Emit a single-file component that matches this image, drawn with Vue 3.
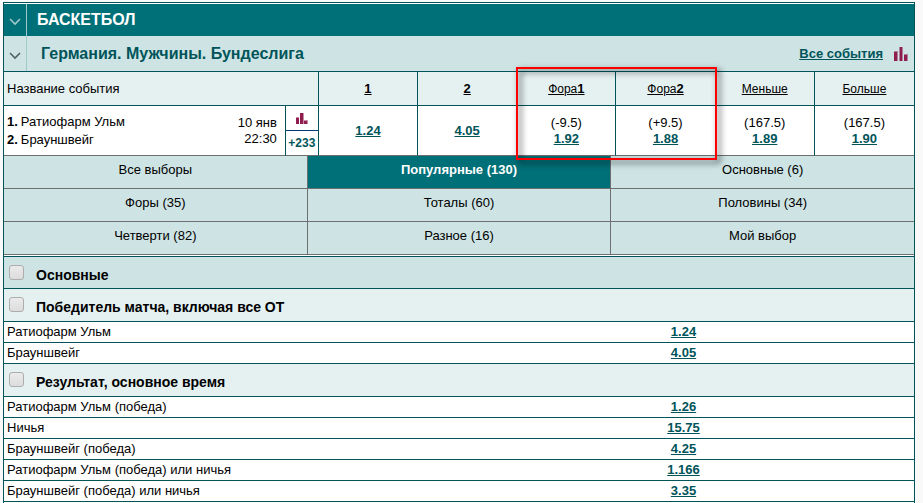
<template>
  <main class="board">
    <header class="sport">
      <button class="toggle" type="button" aria-label="Свернуть">
        <svg width="12" height="8" viewBox="0 0 12 8"><path d="M1 1l5 5 5-5" /></svg>
      </button>
      <h1>БАСКЕТБОЛ</h1>
    </header>

    <div class="league">
      <button class="toggle" type="button" aria-label="Свернуть">
        <svg width="12" height="8" viewBox="0 0 12 8"><path d="M1 1l5 5 5-5" /></svg>
      </button>
      <h2>Германия. Мужчины. Бундеслига</h2>
      <a class="all-events" href="#">Все события</a>
      <svg class="bars" width="14" height="14" viewBox="0 0 14 14">
        <path class="shade" d="M0 4h4v10H0zM5 0h4v14H5zM10 7h4v7h-4z" />
        <path d="M0 5h3v9H0zM6 0h2v14H6zM10 8h3v6h-3z" />
      </svg>
    </div>

    <div class="event">
      <table>
        <colgroup>
          <col />
          <col class="extra-col" />
          <col v-for="(price, i) in prices" :key="i" class="price-col" />
        </colgroup>
        <thead>
          <tr>
            <th class="name-head" colspan="2">Название события</th>
            <th v-for="col in columns" :key="col.text + col.bold">
              <a href="#">{{ col.text }}<b>{{ col.bold }}</b></a>
            </th>
          </tr>
        </thead>
        <tbody>
          <tr>
            <td>
              <div class="match">
                <div class="teams">
                  <div><b>1.</b><span>Ратиофарм Ульм</span></div>
                  <div><b>2.</b><span>Брауншвейг</span></div>
                </div>
                <div class="date">10 янв<br />22:30</div>
              </div>
            </td>
            <td>
              <div class="stats">
                <svg class="bars" width="12" height="11" viewBox="0 0 12 11">
                  <path class="shade" d="M0 4h3v7H0zM4 0h4v11H4zM8 7h4v4H8z" />
                  <path d="M0 5h3v6H0zM4 0h3v11H4zM8 8h3v3H8z" />
                </svg>
              </div>
              <a class="more" href="#">+233</a>
            </td>
            <td v-for="(price, i) in prices" :key="i" class="price">
              <div v-if="price.handicap">({{ price.handicap }})</div>
              <a class="odds" href="#">{{ price.value }}</a>
            </td>
          </tr>
        </tbody>
      </table>
      <div class="marker"></div>
    </div>

    <nav class="tabs">
      <button
        v-for="tab in tabs"
        :key="tab"
        type="button"
        :class="{ active: tab === activeTab }"
        @click="activeTab = tab"
      >
        {{ tab }}
      </button>
    </nav>

    <section class="markets">
      <label class="heading category">
        <input type="checkbox" />
        <span>Основные</span>
      </label>
      <template v-for="market in markets" :key="market.title">
        <label class="heading">
          <input type="checkbox" />
          <span>{{ market.title }}</span>
        </label>
        <table class="outcomes">
          <tbody>
            <tr v-for="row in market.rows" :key="row.name">
              <td>{{ row.name }}</td>
              <td class="outcome-price"><a class="odds" href="#">{{ row.price }}</a></td>
            </tr>
          </tbody>
        </table>
      </template>
    </section>
  </main>
</template>

<script setup>
import { ref } from "vue";

const columns = [
  { text: "", bold: "1" },
  { text: "", bold: "2" },
  { text: "Фора", bold: "1" },
  { text: "Фора", bold: "2" },
  { text: "Меньше", bold: "" },
  { text: "Больше", bold: "" },
];

const prices = [
  { value: "1.24" },
  { value: "4.05" },
  { handicap: "-9.5", value: "1.92" },
  { handicap: "+9.5", value: "1.88" },
  { handicap: "167.5", value: "1.89" },
  { handicap: "167.5", value: "1.90" },
];

const tabs = [
  "Все выборы",
  "Популярные (130)",
  "Основные (6)",
  "Форы (35)",
  "Тоталы (60)",
  "Половины (34)",
  "Четверти (82)",
  "Разное (16)",
  "Мой выбор",
];
const activeTab = ref("Популярные (130)");

const markets = [
  {
    title: "Победитель матча, включая все ОТ",
    rows: [
      { name: "Ратиофарм Ульм", price: "1.24" },
      { name: "Брауншвейг", price: "4.05" },
    ],
  },
  {
    title: "Результат, основное время",
    rows: [
      { name: "Ратиофарм Ульм (победа)", price: "1.26" },
      { name: "Ничья", price: "15.75" },
      { name: "Брауншвейг (победа)", price: "4.25" },
      { name: "Ратиофарм Ульм (победа) или ничья", price: "1.166" },
      { name: "Брауншвейг (победа) или ничья", price: "3.35" },
    ],
  },
];
</script>

<style>
body {
  background: #f9f9f9;
}
</style>

<style scoped>
.board {
  margin: 2px 8px 0 3px;
  padding-bottom: 1px;
  border: 1px solid #00545a;
  border-bottom: 0;
  background: #fff;
  color: #000;
  font-family: "Liberation Sans", Arial, sans-serif;
  font-size: 13px;
  line-height: 16px;
}
button {
  font: inherit;
  border: 0;
  padding: 0;
}
table {
  width: 100%;
  border-spacing: 0;
  table-layout: fixed;
}
.sport,
.league {
  display: flex;
  align-items: center;
}
.sport {
  height: 32px;
  margin-top: 1px;
  background: #007078;
  color: #fff;
}
.league {
  height: 35px;
  background: #cee4e4;
  color: #00545a;
  border-bottom: 1px solid #00545a;
}
h1,
h2 {
  margin: 0;
  font-size: 16px;
}
h1 {
  padding-left: 10px;
}
h2 {
  padding-left: 14px;
  flex: 1;
}
.toggle {
  display: flex;
  align-items: center;
  justify-content: center;
  align-self: stretch;
  width: 23px;
  background: none;
  border-right: 1px solid #9fcaca;
  color: #9fcaca;
}
.toggle svg {
  margin-top: 4px;
}
.league .toggle {
  color: #4f6363;
}
.toggle path {
  fill: none;
  stroke: currentColor;
  stroke-width: 1.6;
}
.bars {
  display: block;
  fill: #8f1d4f;
}
.bars .shade {
  fill-opacity: 0.5;
}
.all-events {
  color: #00545a;
  font-weight: bold;
}
.league .bars {
  margin: 0 6px 0 11px;
}

.event {
  position: relative;
}
.event th,
.event td {
  padding: 0;
  border-right: 1px solid #00545a;
}
.event th:last-child,
.event td:last-child {
  border-right: 0;
}
.event th {
  height: 33px;
  background: #e5f1f1;
  border-bottom: 1px solid #00545a;
  font-weight: normal;
}
.event td {
  height: 49px;
  border-bottom: 1px solid #6f6f6f;
}
.event th a {
  color: #000;
  font-size: 12px;
}
.event th b {
  font-size: 13px;
}
.extra-col {
  width: 33px;
}
.price-col {
  width: 10.9%;
}
.event .name-head {
  padding-left: 3px;
  text-align: left;
}
.match {
  display: flex;
  align-items: center;
  justify-content: space-between;
  padding: 0 8px 0 3px;
}
.teams {
  line-height: 18px;
}
.teams b {
  margin-right: 3px;
}
.date {
  text-align: right;
}
.stats {
  display: flex;
  align-items: center;
  justify-content: center;
  height: 24px;
  border-bottom: 1px solid #003a7d;
}
.more {
  display: block;
  font-size: 12px;
  line-height: 24px;
  font-weight: bold;
  color: #00545a;
  text-align: center;
  text-decoration: none;
}
.price {
  text-align: center;
}
.odds {
  color: #00545a;
  font-weight: bold;
}
.marker {
  position: absolute;
  left: 56.3%;
  width: 22.1%;
  top: -5px;
  bottom: -4px;
  box-sizing: border-box;
  border: 2px solid #f00;
  filter: drop-shadow(3px 3px 3px rgba(0, 0, 0, 0.8));
  pointer-events: none;
}

.tabs {
  display: grid;
  grid-template-columns: repeat(3, 1fr);
  gap: 1px;
  background: #6f6f6f;
  border-bottom: 1px solid #6f6f6f;
}
.tabs button {
  height: 32px;
  padding-bottom: 4px;
  background: #cee4e4;
  color: #000;
}
.tabs .active {
  background: #007078;
  color: #fff;
  font-weight: bold;
}

.markets {
  margin-top: 1px;
  border-top: 1px solid #00545a;
}
.heading {
  display: flex;
  align-items: flex-start;
  gap: 12px;
  height: 32px;
  padding-left: 5px;
  background: #e5f1f1;
  border-bottom: 1px solid #00545a;
  font-size: 14px;
  font-weight: bold;
}
.category {
  height: 31px;
  background: #cee4e4;
}
.heading input {
  appearance: none;
  width: 15px;
  height: 15px;
  margin: 8px 0 0;
  border: 1px solid #adadad;
  border-radius: 3px;
  background: linear-gradient(#ebebeb, #dcdcdc);
}
.heading span {
  padding-top: 10px;
}
.outcomes td {
  height: 20px;
  padding: 0 3px;
  line-height: 18px;
  border-bottom: 1px solid #00545a;
}
.outcomes .outcome-price {
  width: 50%;
  text-align: center;
}
</style>
